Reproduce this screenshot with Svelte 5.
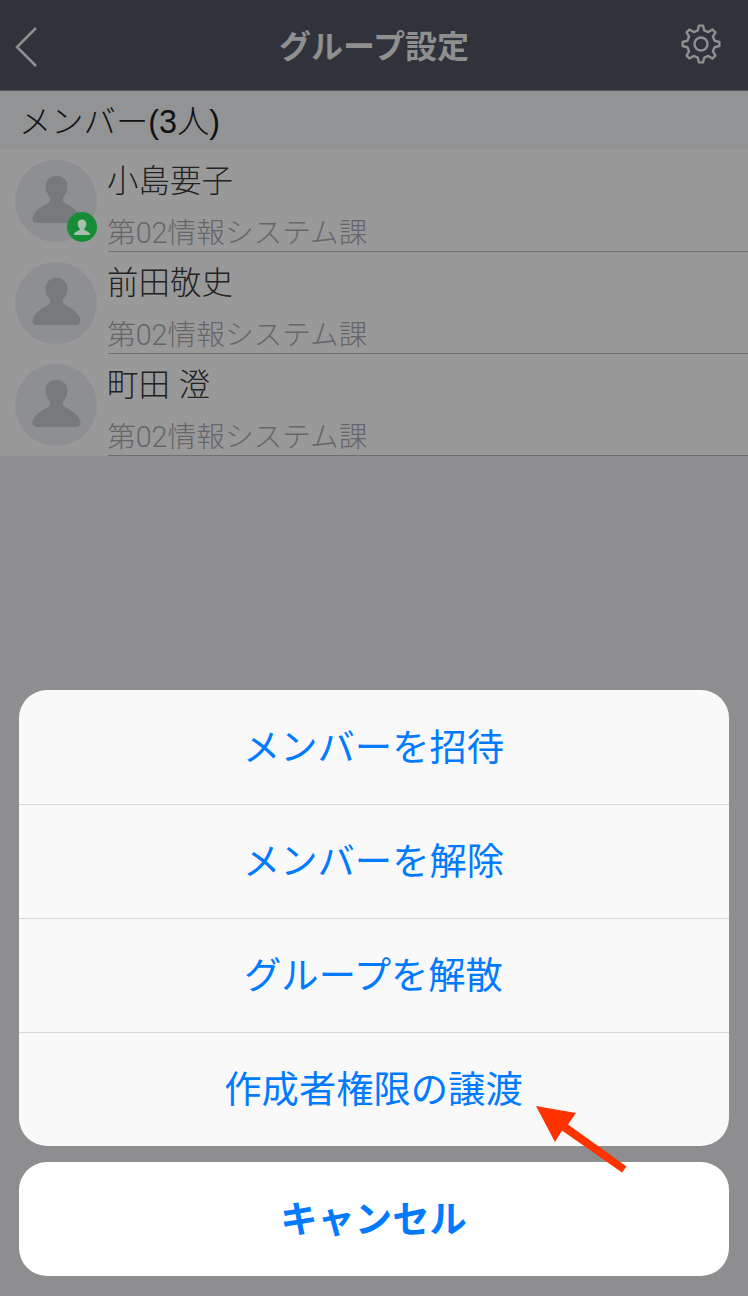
<script>
	const members = [
		{ name: '小島要子', dept: '第02情報システム課', owner: true },
		{ name: '前田敬史', dept: '第02情報システム課', owner: false },
		{ name: '町田 澄', dept: '第02情報システム課', owner: false }
	];
	const actions = ['メンバーを招待', 'メンバーを解除', 'グループを解散', '作成者権限の譲渡'];

	// gear outline, 8 teeth around 0,0
	function gearPath(teeth, outer, inner) {
		const step = (Math.PI * 2) / teeth;
		let d = '';
		for (let i = 0; i < teeth; i++) {
			const a = i * step - Math.PI / 2;
			const pts = [
				[inner, a - step * 0.3],
				[outer, a - step * 0.14],
				[outer, a + step * 0.14],
				[inner, a + step * 0.3]
			];
			for (const [r, t] of pts) {
				d += (d ? 'L' : 'M') + (r * Math.cos(t)).toFixed(2) + ' ' + (r * Math.sin(t)).toFixed(2);
			}
		}
		return d + 'Z';
	}
	const gear = gearPath(8, 18.5, 14);
</script>

<div class="page">
	<header class="topbar">
		<svg class="back" width="24" height="42" viewBox="0 0 24 42">
			<path d="M22 2 L3 21 L22 40" fill="none" stroke="#8f8f8f" stroke-width="2.5" />
		</svg>
		<h1>グループ設定</h1>
		<svg class="gear" width="42" height="42" viewBox="-21 -21 42 42">
			<path d={gear} fill="none" stroke="#8f8f8f" stroke-width="2.4" stroke-linejoin="round" />
			<circle r="6.5" fill="none" stroke="#8f8f8f" stroke-width="2.4" />
		</svg>
	</header>

	<div class="section">メンバー(3人)</div>

	<ul class="members">
		{#each members as m}
			<li>
				<div class="avatar">
					<svg width="82" height="82" viewBox="0 0 82 82">
						<circle cx="41" cy="41" r="41" fill="#8e8f93" />
						<path d="M41 16c-7 0-10.500 5-10.500 11 0 4 2 7.500 4 10 1.500 2 1 4-1.500 6-4 2.500-12 6-15 13-1.500 4 .5 7 3 7h41c2.500 0 4.500-3 3-7-3-7-11-10.500-15-13-2.500-2-3-4-1.500-6 2-2.500 4-6 4-10 0-6-3.500-11-10.500-11z" fill="#777a7d" />
					</svg>
					{#if m.owner}
						<span class="badge">
							<svg width="30" height="30" viewBox="0 0 30 30">
								<circle cx="15" cy="15" r="15" fill="#178c36" />
								<path d="M15 7.500c-3 0-4.300 2.300-4.300 4.500 0 2 1 3.500 2 4.500.6.900 0 1.500-1 2-1.600.7-3.800 1.700-4.500 3-.5 1 0 1.500.9 1.500h13.800c.9 0 1.400-.5.900-1.500-.7-1.300-2.900-2.300-4.500-3-1-.5-1.600-1.100-1-2 1-1 2-2.500 2-4.500 0-2.200-1.300-4.500-4.300-4.500z" fill="#a9bfae" />
							</svg>
						</span>
					{/if}
				</div>
				<div class="info">
					<div class="name">{m.name}</div>
					<div class="dept">{m.dept}</div>
				</div>
			</li>
		{/each}
	</ul>

	<div class="sheet">
		<div class="actions">
			{#each actions as a}
				<button type="button">{a}</button>
			{/each}
		</div>
		<button type="button" class="cancel">キャンセル</button>
	</div>

	<svg class="arrow" width="100" height="76" viewBox="530 1100 100 76">
		<polygon points="536,1106 576,1113 568,1124.500 626.500,1166.500 622,1172.500 562,1130.500 555,1142" fill="#ff3300" />
	</svg>
</div>

<style>
	:global(body) {
		margin: 0;
		background: #8e8e90;
	}

	.page {
		position: relative;
		width: 748px;
		height: 1296px;
		display: flex;
		flex-direction: column;
		background: #8e8e90;
		font-family: "Liberation Sans", "Noto Sans CJK JP", sans-serif;
		overflow: hidden;
	}

	.topbar {
		height: 90px;
		flex: none;
		display: flex;
		align-items: center;
		justify-content: center;
		background: #30333c;
		border-bottom: 1px solid #55575c;
		position: relative;
	}

	.topbar h1 {
		margin: 0 0 2px;
		font-size: 32px;
		font-weight: 700;
		color: #8f8f8f;
	}

	.back {
		position: absolute;
		left: 14px;
		top: 26px;
	}

	.gear {
		position: absolute;
		left: 680px;
		top: 23px;
	}

	.section {
		height: 59px;
		flex: none;
		box-sizing: border-box;
		padding: 0 0 3px 19px;
		display: flex;
		align-items: center;
		font-size: 32.300px;
		font-weight: 300;
		color: #111;
		background: #929395;
	}

	.members {
		list-style: none;
		margin: 0;
		padding: 0;
		background: #999;
	}

	.members li {
		height: 102px;
		box-sizing: border-box;
		display: flex;
		padding-left: 15px;
	}

	.avatar {
		position: relative;
		flex: none;
		width: 82px;
		height: 82px;
		margin-top: 10px;
		margin-right: 11px;
	}

	.avatar > svg,
	.badge svg {
		display: block;
	}

	.badge {
		position: absolute;
		left: 52px;
		top: 52px;
	}

	.info {
		flex: 1;
		border-bottom: 1px solid #6f7072;
		display: flex;
		flex-direction: column;
		justify-content: space-between;
	}

	.name {
		font-size: 31.500px;
		font-weight: 300;
		line-height: 40px;
		margin: 11px 0 0 -1px;
		color: #222;
	}

	.dept {
		font-family: Roboto, "Noto Sans CJK JP", sans-serif;
		font-size: 28.700px;
		font-weight: 300;
		line-height: 36px;
		margin-left: -1px;
		color: #65666a;
	}

	.sheet {
		margin-top: auto;
		padding: 0 19px 20px;
		display: flex;
		flex-direction: column;
		gap: 16px;
	}

	.actions {
		background: #f9f9f9;
		border-radius: 28px;
		overflow: hidden;
		display: flex;
		flex-direction: column;
	}

	button {
		height: 114px;
		border: none;
		padding: 0 1px 5px 0;
		background: none;
		font-family: inherit;
		font-size: 37.300px;
		color: #007aff;
	}

	.actions button + button {
		border-top: 1px solid #d6d6da;
	}

	.cancel {
		background: #fff;
		border-radius: 28px;
		font-weight: 700;
	}

	.arrow {
		position: absolute;
		left: 530px;
		top: 1100px;
	}
</style>
